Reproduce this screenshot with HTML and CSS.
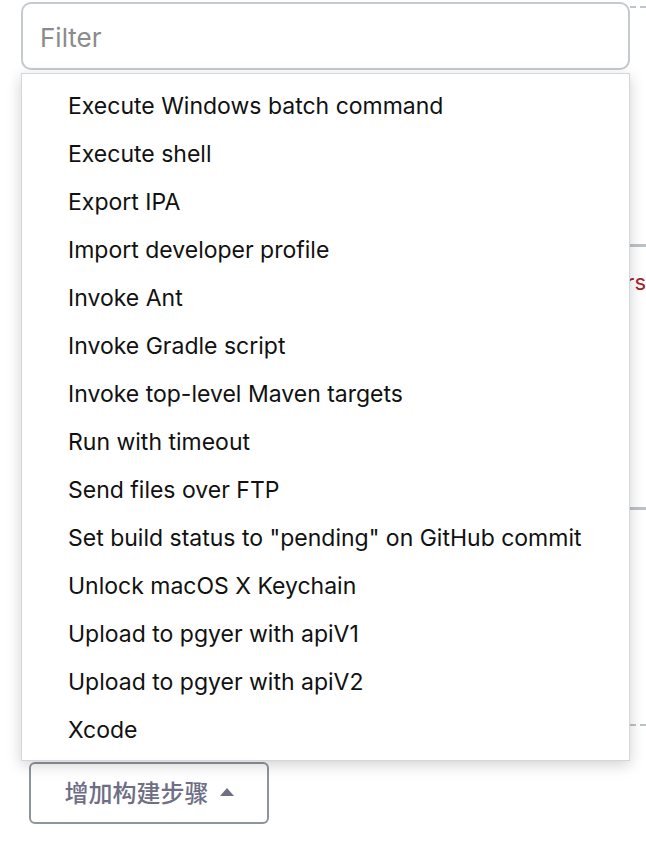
FILE: index.html
```html
<!DOCTYPE html>
<html lang="zh-CN">
<head>
<meta charset="utf-8">
<title>Add build step</title>
<link rel="stylesheet" href="styles.css">
</head>
<body>
  <div class="top">
    <div class="filter"><span class="placeholder">Filter</span></div>
    <div class="side"></div>
  </div>
  <div class="section">
    <div class="rule rule-a"></div>
    <div class="err">Errors</div>
    <div class="rule rule-b"></div>
    <div class="dash"></div>
  </div>
  <div class="btn-row">
    <button class="add-btn">增加构建步骤 <span class="caret"></span></button>
  </div>

  <ul class="menu">
    <li>Execute Windows batch command</li>
    <li>Execute shell</li>
    <li>Export IPA</li>
    <li>Import developer profile</li>
    <li>Invoke Ant</li>
    <li>Invoke Gradle script</li>
    <li>Invoke top-level Maven targets</li>
    <li>Run with timeout</li>
    <li>Send files over FTP</li>
    <li>Set build status to "pending" on GitHub commit</li>
    <li>Unlock macOS X Keychain</li>
    <li>Upload to pgyer with apiV1</li>
    <li>Upload to pgyer with apiV2</li>
    <li>Xcode</li>
  </ul>
</body>
</html>
```
FILE: styles.css
```css
html, body {
  margin: 0;
  padding: 0;
  background: #ffffff;
}
body {
  width: 646px;
  height: 866px;
  overflow: hidden;
  position: relative;
  font-family: "Inter", "Liberation Sans", "Noto Sans CJK SC", sans-serif;
  color: #111111;
}
.top {
  display: flex;
  padding: 2px 0 0 21px;
}
.filter {
  flex: 0 0 609px;
  box-sizing: border-box;
  height: 68px;
  border: 2px solid #c4cacf;
  border-radius: 10px;
  display: flex;
  align-items: center;
  padding: 2px 0 0 17px;
  background: #fff;
}
.placeholder {
  font-size: 26px;
  color: #8b8b8b;
}
.side {
  flex: 1;
  margin-top: 4px;
  height: 0;
  border-top: 2px dashed #bfc5ca;
}
.section {
  margin-left: 21px;
  height: 692px;
  display: flex;
  flex-direction: column;
}
.rule {
  height: 3px;
  background: #bcc2c7;
}
.rule-a { margin-top: 174px; }
.err {
  margin-top: 22px;
  margin-right: 0;
  text-align: right;
  font-size: 22px;
  color: #a3262a;
  line-height: 26px;
}
.rule-b { margin-top: 212px; }
.dash {
  margin-top: 214px;
  border-top: 2px dashed #bcc2c7;
}
.btn-row {
  padding-left: 29px;
}
.add-btn {
  box-sizing: border-box;
  width: 240px;
  height: 62px;
  border: 2px solid #8e969d;
  border-radius: 6px;
  background: #fff;
  font-family: "Noto Sans CJK SC", sans-serif;
  font-size: 24px;
  font-weight: 500;
  color: #6e6e85;
  display: flex;
  align-items: center;
  justify-content: center;
  gap: 8px;
  padding: 0 0 3px 0;
}
.caret {
  width: 0;
  height: 0;
  border-left: 7px solid transparent;
  border-right: 7px solid transparent;
  border-bottom: 8px solid #6e6e85;
  margin-left: 3px;
}
.menu {
  position: absolute;
  top: 73px;
  left: 21px;
  width: 609px;
  box-sizing: border-box;
  margin: 0;
  padding: 8px 0 6px;
  list-style: none;
  background: #fff;
  border: 1px solid #d3d7db;
  box-shadow: 0 4px 14px rgba(0, 0, 0, 0.18);
}
.menu li {
  height: 48px;
  line-height: 48px;
  padding-left: 46px;
  font-size: 23px;
  color: #111;
  white-space: nowrap;
}
```
